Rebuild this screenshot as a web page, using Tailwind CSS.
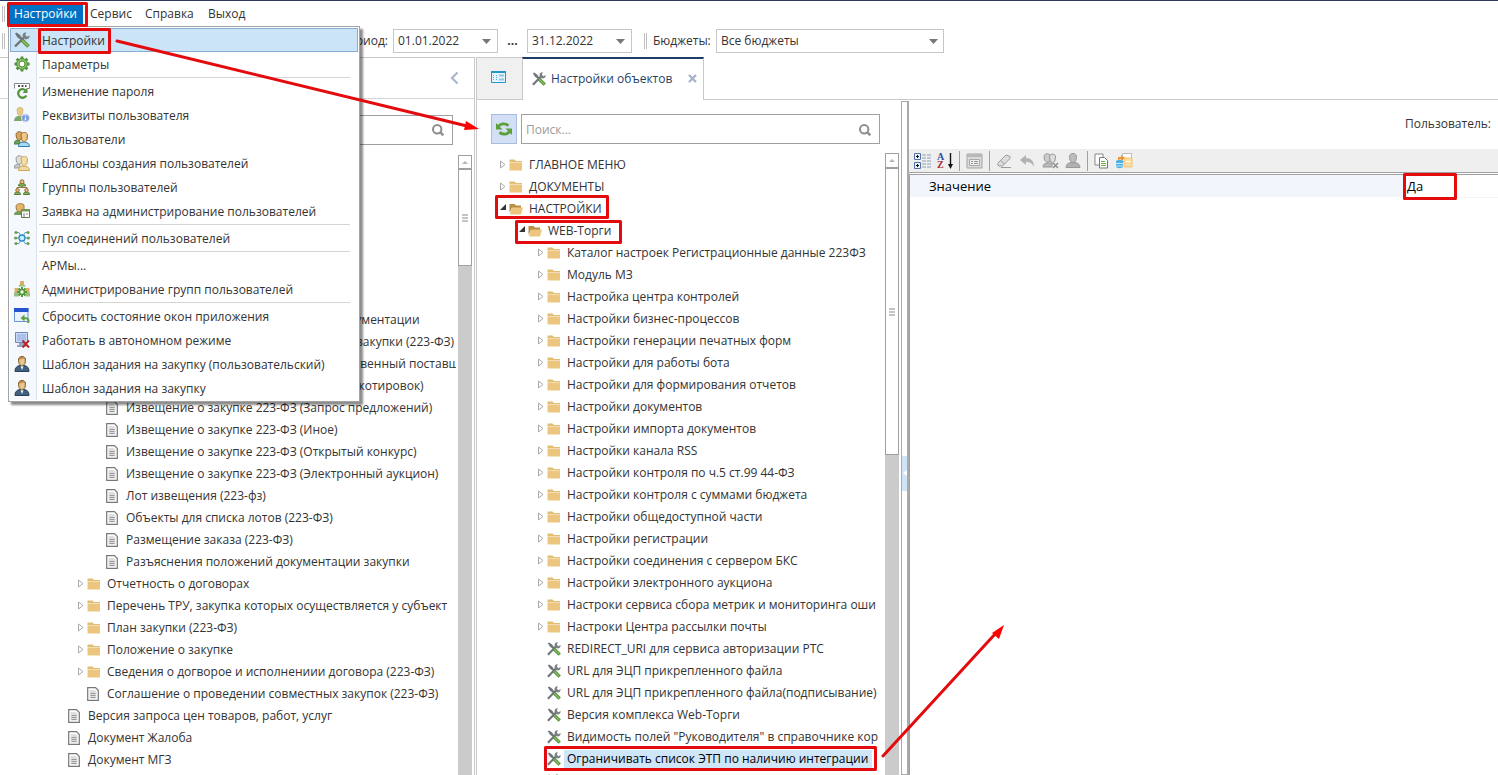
<!DOCTYPE html>
<html lang="ru">
<head>
<meta charset="utf-8">
<title>Настройки объектов</title>
<script src="https://cdn.jsdelivr.net/npm/@tailwindcss/browser@4"></script>
</head>
<body class="h-screen overflow-hidden bg-white font-['Open_Sans','Noto_Sans',sans-serif] text-[12px] text-[#333]">
<svg class="hidden">
  <symbol id="tools" viewBox="0 0 16 16"><path d="M1 1.500l1.500-1L6 3l2.500 3.500L7 8 3.500 5.500z" fill="#6f7478"/><path d="M1 14.500L10 5.500" stroke="#6f7478" stroke-width="2.400" fill="none"/><path d="M15.500 3.500l-2.500 1.300-1.700-1.700 1-2.700C9.500.2 8 2.400 8.800 5L11 7.200c2.700.7 5-1 4.500-3.700z" fill="#7b8084"/><path d="M8 8l6.500 6.500" stroke="#5b9438" stroke-width="3.800"/><path d="M8.500 8.500l5.500 5.500" stroke="#94c574" stroke-width="1.200"/></symbol>
  <symbol id="gear" viewBox="0 0 16 16"><path d="M8 .5v15M.5 8h15M2.700 2.700l10.600 10.600M13.300 2.700L2.700 13.300" stroke="#4f8f3a" stroke-width="2.800"/><circle cx="8" cy="8" r="5.400" fill="#8cc46c" stroke="#4f8f3a"/><circle cx="8" cy="8" r="3" fill="#fff" stroke="#4f8f3a"/></symbol>
  <symbol id="passwd" viewBox="0 0 16 16"><path d="M.5 5.500v-5h15v5h-3" fill="#fff" stroke="#888"/><path d="M4 3h2M7.500 3h2M11 3h1.500" stroke="#555" stroke-width="2"/><path d="M12.300 12.500A4.300 4.300 0 1 1 11.500 7.300" fill="none" stroke="#55963c" stroke-width="2.300"/><path d="M13.500 5v5H8.500z" fill="#55963c"/></symbol>
  <symbol id="userinfo" viewBox="0 0 16 16"><path d="M0 14c0-3 2-4.500 4-5h3c2 .5 4 2 4 5z" fill="#7da968"/><path d="M3 2c1-2 5-2 6 0l-.5 5-2.500 2.500L3.500 7z" fill="#e8c980" stroke="#c9a75e" stroke-width=".6"/><circle cx="11.500" cy="11" r="4" fill="#7597dc" stroke="#dce7fb"/><path d="M11.500 10.500V13.500M11.500 8.300v1.200" stroke="#fff" stroke-width="1.400"/></symbol>
  <symbol id="users" viewBox="0 0 16 16"><path d="M0 13c0-3 2-4 5-4l2 4z" fill="#6ea05c" stroke="#4d7a40"/><path d="M2 3c1-3 5-2.500 6-1v6L5 9.500 2.500 7z" fill="#d8a75f" stroke="#94672f"/><path d="M4.500 15.500c0-3 1.500-4.500 5-4.500s6 1.500 6 4.500z" fill="#a7d8f5" stroke="#2f7fb5"/><path d="M7 3.500c1.500-3 5.500-2.500 6.500 0l-.5 5-3 3-2.500-3z" fill="#f0c886" stroke="#94672f"/></symbol>
  <symbol id="usersgray" viewBox="0 0 16 16"><path d="M0 13c0-3 2-4 5-4l2 4z" fill="#c8c8c8" stroke="#999"/><path d="M2 3c1-3 5-2.500 6-1v6L5 9.500 2.500 7z" fill="#dedede" stroke="#999"/><path d="M4.500 15.500c0-3 1.500-4.500 5-4.500s6 1.500 6 4.500z" fill="#f0d9a2" stroke="#c9a75e"/><path d="M7 3.500c1.500-3 5.500-2.500 6.500 0l-.5 5-3 3-2.500-3z" fill="#f5dda0" stroke="#c9a75e"/></symbol>
  <symbol id="org" viewBox="0 0 16 16"><path d="M3 12V8.500h10V12M8 8.500V6" fill="none" stroke="#9a7436"/><path d="M4.500 7c0-2 1-2.500 3.500-2.500s3.500.5 3.500 2.500zM.5 15.500c0-2 1-2.500 3-2.500s3 .5 3 2.500zM9.500 15.500c0-2 1-2.500 3-2.500s3 .5 3 2.500z" fill="#82b463" stroke="#507d35"/><circle cx="8" cy="2.800" r="2" fill="#eac27c" stroke="#94672f"/><circle cx="3.500" cy="11.300" r="1.700" fill="#eac27c" stroke="#94672f"/><circle cx="12.500" cy="11.300" r="1.700" fill="#eac27c" stroke="#94672f"/></symbol>
  <symbol id="request" viewBox="0 0 16 16"><path d="M0 12c0-3 2-4 5-4h3v4z" fill="#6ea05c"/><path d="M2 3c1-3 6-3 8-1v5L5 9 2.500 7z" fill="#e3b670" stroke="#a97a3c"/><path d="M7.500 6.500h8v8h-8z" fill="#fff" stroke="#5d7c48"/><path d="M7 6h9v2.500H7z" fill="#6f9853"/><path d="M9 11h2M12 11h2M9 13h2" stroke="#777"/></symbol>
  <symbol id="pool" viewBox="0 0 16 16"><path d="M2 2.500h3L8 8l3-5.500h3M1 8h14M2 13.500h3L8 8l3 5.500h3" fill="none" stroke="#56a0ca"/><circle cx="8" cy="8" r="3" fill="#c5ecff" stroke="#2c8cc6" stroke-width="1.300"/><g fill="#6d9e4d"><circle cx="2" cy="2.500" r="1.600"/><circle cx="14" cy="2.500" r="1.600"/><circle cx="1.600" cy="8" r="1.600"/><circle cx="14.400" cy="8" r="1.600"/><circle cx="2" cy="13.500" r="1.600"/><circle cx="14" cy="13.500" r="1.600"/></g></symbol>
  <symbol id="orggear" viewBox="0 0 16 16"><path d="M4.500 5.500c0-2 1.500-2 3.500-2s3.500 0 3.500 2zM0 15.500V12c0-1.500 4-1.500 4.500 0v3.500zM11.500 15.500V12c.5-1.500 4.500-1.500 4.500 0v3.500z" fill="#9cbf80"/><path d="M6 0h4v4H6zM.5 7h4v4h-4zM11.500 7h4v4h-4z" fill="#dcae68"/><path d="M8 6v10M3 11h10M4.500 7.500l7 7M11.500 7.500l-7 7" stroke="#4f9a35" stroke-width="2"/><circle cx="8" cy="11" r="2.400" fill="#fff" stroke="#4f9a35" stroke-width="1.500"/></symbol>
  <symbol id="resetwin" viewBox="0 0 16 16"><path d="M.5.500h13.500v13H.5z" fill="#eaf2fd" stroke="#6f93cf"/><path d="M0 0h14.500v4H0z" fill="#2455cf"/><path d="M9.500 10.500c4-1 6 .5 4.500 4.500" fill="none" stroke="#5da044" stroke-width="2"/><path d="M10.500 6.500v7L6.500 10z" fill="#5da044"/></symbol>
  <symbol id="offline" viewBox="0 0 16 16"><path d="M1.500.5h12v10h-12z" fill="#cddcf6" stroke="#7384b8"/><path d="M3 2h9v7H3z" fill="#a9c1ec"/><path d="M5 11h5v2h2v2H3v-2h2z" fill="#93a3c8"/><path d="M8.500 8.500l6.500 7M15 8.500l-6.500 7" stroke="#b3282d" stroke-width="2"/></symbol>
  <symbol id="person" viewBox="0 0 16 16"><path d="M1 15.500c0-4 2-5.500 5-6h4c3 .5 5 2 5 6z" fill="#41607f" stroke="#2b4056"/><path d="M6.500 10L8 14l1.500-4z" fill="#fff"/><path d="M4.500 3c1-3.500 6-3.500 7 0L11 7.500 8 10.500 5 7.500z" fill="#eac58c" stroke="#7a5a2d"/><path d="M4.500 4C5-.5 11-.5 11.500 4L9 2.500z" fill="#b98d45"/></symbol>
  <symbol id="folder" viewBox="0 0 14 14"><path d="M.5 1.500h5L7 3h6v1.500H.5z" fill="#e3bd72"/><path d="M.5 5h12.500v7.500H.5z" fill="#ecc67f"/></symbol>
  <symbol id="folderopen" viewBox="0 0 14 14"><path d="M.5 2h5L7 3.500h5V6H3L.5 11z" fill="#b98f45"/><path d="M3 5.500h11L12 12.500H1z" fill="#ecc67f"/></symbol>
  <symbol id="doc" viewBox="0 0 12 14"><path d="M.7.700h7.800l2.800 2.800v9.800H.7z" fill="#fff" stroke="#777" stroke-width="1.200"/><path d="M2.500 3h5l2 1.500V11.500h-7z" fill="#dedede"/><path d="M3.500 6.500h5M3.500 8.500h5M3.500 10.500h5" stroke="#999"/></symbol>
  <symbol id="search" viewBox="0 0 12 12"><circle cx="5.200" cy="5.200" r="4.200" fill="none" stroke="#8d8d8d" stroke-width="2"/><path d="M8 8l3.300 3.300" stroke="#8d8d8d" stroke-width="2.400"/></symbol>
</svg>

<div class="relative flex h-full flex-col border-t border-[#2c3763]">
  <nav class="flex h-[26px] shrink-0 items-center">
    <span class="ml-[2px] h-4 w-[3px] border-x border-[#c0c0c0]"></span>
    <button class="ml-[3px] h-5 w-[75px] bg-[#0072c6] text-white">Настройки</button>
    <button class="ml-[7px] w-[43px] text-left whitespace-nowrap">Сервис</button>
    <button class="ml-3 w-[51px] text-left whitespace-nowrap">Справка</button>
    <button class="ml-3 w-[38px] text-left whitespace-nowrap">Выход</button>
  </nav>
  <div class="flex h-[30px] shrink-0 items-center pb-[2px]">
    <span class="ml-[2px] h-4 w-[3px] border-x border-[#c0c0c0]"></span>
    <div class="flex w-[388px] justify-end pr-[5px]">Период:</div>
    <button aria-label="Начало периода" class="flex h-6 w-[105px] items-center justify-between border border-[#c6c6c6] pr-[6px] pl-1">01.01.2022<svg width="9" height="5"><path d="M0 0h9L4.500 5z" fill="#777"/></svg></button>
    <span class="w-[29px] text-center font-bold">...</span>
    <button aria-label="Конец периода" class="flex h-6 w-[105px] items-center justify-between border border-[#c6c6c6] pr-[6px] pl-1">31.12.2022<svg width="9" height="5"><path d="M0 0h9L4.500 5z" fill="#777"/></svg></button>
    <span class="ml-3 h-4 w-[3px] border-x border-[#c0c0c0]"></span>
    <label for="budget" class="ml-[6px] w-[63px] whitespace-nowrap">Бюджеты:</label>
    <div class="relative">
      <select id="budget" class="block h-6 w-[228px] appearance-none border border-[#c6c6c6] bg-white pl-1"><option>Все бюджеты</option></select>
      <svg class="pointer-events-none absolute top-[10px] right-[6px]" width="9" height="5"><path d="M0 0h9L4.500 5z" fill="#777"/></svg>
    </div>
  </div>

  <main class="flex min-h-0 flex-1">
    <section class="flex w-[475px] shrink-0 flex-col border-t border-r border-[#c9c9c9]">
      <div class="flex h-[41px] shrink-0 items-center justify-end border-b border-[#d5d5d5] pr-[15px]">
        <button aria-label="Свернуть"><svg width="9" height="14"><path d="M7.500 1.500L2 7l5.500 5.500" fill="none" stroke="#a9b6cc" stroke-width="2.200"/></svg></button>
      </div>
      <div class="relative mx-[21px] mt-4 h-[30px] shrink-0">
        <input aria-label="Поиск документов" class="h-full w-full border border-[#a0a0a0] px-1">
        <svg class="absolute top-[9px] right-[9px]" width="12" height="12"><use href="#search"/></svg>
      </div>
      <div class="mt-[10px] flex min-h-0 flex-1 pr-[2px]">
        <ul id="left-tree" class="w-[456px] overflow-hidden pt-[154px]"></ul>
        <div class="ml-[2px] flex w-[14px] flex-col bg-[#cbcbcb]">
          <div class="grid h-[14px] place-items-center border border-[#a0a0a0] bg-white"><svg width="6" height="3"><path d="M0 3h6L3 0z" fill="#b5b5b5"/></svg></div>
          <div class="grid h-[97px] place-items-center border border-[#a0a0a0] bg-white"><svg width="6" height="8"><path d="M0 1h6M0 4h6M0 7h6" stroke="#c4c4c4" stroke-width="2"/></svg></div>
        </div>
      </div>
    </section>

    <section class="ml-px flex min-w-0 flex-1 flex-col border-l border-[#c9c9c9]">
      <div class="flex h-[43px] shrink-0">
        <button aria-label="Обзор" class="grid w-[45px] place-items-center border-y border-[#c9c9c9] bg-[#f0f0f0] pr-[2px] pb-1"><svg width="15" height="12"><path d="M.5.500h14v11H.5z" fill="#e6f5fd" stroke="#2496c8"/><path d="M0 0h15v2H0z" fill="#2496c8"/><path d="M8 4.500h5M8 8.500h5" stroke="#8ec9e6" stroke-width="2"/><path d="M2 4.500h1M5 4.500h1M2 6.500h1M5 6.500h1M2 8.500h1M5 8.500h1" stroke="#58afd6"/></svg></button>
        <div class="flex w-[182px] items-center border-x border-t-2 border-x-[#c9c9c9] border-t-[#1d3f66] pb-[2px] pl-[9px] text-[#1f3f68]">
          <svg width="14" height="14"><use href="#tools"/></svg>
          <span class="ml-[5px] w-[125px] whitespace-nowrap">Настройки объектов</span>
          <button aria-label="Закрыть" class="ml-3"><svg width="9" height="9"><path d="M1 1l7 7M8 1l-7 7" stroke="#a3b1c9" stroke-width="2.200"/></svg></button>
        </div>
        <div class="flex-1 border-b border-[#c9c9c9]"></div>
      </div>
      <div class="flex min-h-0 flex-1">
        <div class="flex w-[424px] shrink-0 flex-col">
          <div class="mt-[14px] ml-[14px] flex h-[30px] shrink-0 gap-1">
            <button aria-label="Обновить" class="grid w-[26px] place-items-center border border-[#a6bce0] bg-[#d3dff5]"><svg width="16" height="14"><path d="M2 5C4 1.500 8.500.800 12.500 3.500" fill="none" stroke="#5da03a" stroke-width="2.800"/><path d="M0 1v6.500h6.500z" fill="#5da03a"/><path d="M14 9C12 12.500 7.500 13.200 3.500 10.500" fill="none" stroke="#5da03a" stroke-width="2.800"/><path d="M16 13V6.500H9.500z" fill="#5da03a"/></svg></button>
            <div class="relative w-[359px]">
              <input aria-label="Поиск настроек" placeholder="Поиск..." class="h-full w-full border border-[#a0a0a0] px-1 placeholder:text-[#9b9b9b]">
              <svg class="absolute top-[10px] right-[9px]" width="12" height="12"><use href="#search"/></svg>
            </div>
          </div>
          <div class="mt-[9px] flex min-h-0 flex-1">
            <ul id="center-tree" class="w-[405px] overflow-hidden pt-px"></ul>
            <div class="ml-[3px] flex w-[14px] flex-col bg-[#cbcbcb]">
              <div class="grid h-[15px] place-items-center border border-[#a0a0a0] bg-white"><svg width="6" height="3"><path d="M0 3h6L3 0z" fill="#b5b5b5"/></svg></div>
              <div class="grid h-[287px] place-items-center border border-[#a0a0a0] bg-white"><svg width="6" height="8"><path d="M0 1h6M0 4h6M0 7h6" stroke="#c4c4c4" stroke-width="2"/></svg></div>
            </div>
          </div>
        </div>
        <div class="mt-px flex w-2 shrink-0 flex-col justify-center border border-r-2 border-[#aaa]"><div class="mt-[70px] grid h-[35px] place-items-center bg-[#cfe4f7]"><svg width="4" height="6"><path d="M0 3l4-3v6z" fill="#fff"/></svg></div></div>
        <div class="flex min-w-0 flex-1 flex-col">
          <div class="flex h-[49px] shrink-0 items-center justify-end pr-[7px] pb-[2px]">Пользователь:</div>
          <div class="flex h-[23px] shrink-0 items-center bg-[#efefef] pl-[5px]">
            <button aria-label="По категориям" class="w-[17px]"><svg width="17" height="16"><path d="M.5.500h6v6h-6zM.5 9.500h6v6h-6z" fill="#e7effb" stroke="#5571a8"/><path d="M2 3.500h3M3.500 2v3M2 12.500h3M3.500 11v3" stroke="#111"/><path d="M8 2h4M13 2h4M8 5h4M13 5h4M8 8h4M13 8h4M8 11h4M13 11h4M8 14h4M13 14h4" stroke="#8aa0bd"/></svg></button>
            <button aria-label="По алфавиту" class="relative ml-[6px] h-4 w-4 font-['Liberation_Serif',serif] text-[10px] leading-[8px] font-bold"><span class="block text-left text-[#2d4fa0]">A</span><span class="block text-left text-[#a82c35]">Z</span><svg class="absolute top-0 right-0" width="5" height="16"><path d="M2.500 0v12" stroke="#111" stroke-width="1.400"/><path d="M0 11h5l-2.500 5z" fill="#111"/></svg></button>
            <span class="mx-[6px] h-5 w-px bg-[#a0a0a0]"></span>
            <button aria-label="Форма"><svg width="17" height="16"><path d="M1 1h15v14H1z" fill="#dadada" stroke="#a5a5a5"/><path d="M1 1h15v3H1z" fill="#b8b8b8"/><path d="M3.500 6.500h10v6h-10z" fill="#eee" stroke="#aaa"/><path d="M5 8.500h2M8 8.500h4M5 10.500h2M8 10.500h4" stroke="#999"/></svg></button>
            <span class="mx-[6px] h-5 w-px bg-[#a0a0a0]"></span>
            <button aria-label="Очистить"><svg width="16" height="16"><path d="M1.500 10.500L10 2l4 1.500v2L6.500 13h-4z" fill="#ddd" stroke="#9b9b9b"/><path d="M4.500 7.500l4 3.500M5 14.500h10" stroke="#9b9b9b"/></svg></button>
            <button aria-label="Отменить" class="ml-2"><svg width="15" height="16"><path d="M0 7l6-5v3c5 0 8 3 8 9-2-4-4-5-8-5v3z" fill="#b3b3b3"/></svg></button>
            <button aria-label="Удалить пользователей" class="ml-[7px]"><svg width="17" height="16"><path d="M1 14c0-3 2-4 5-4h4v4z" fill="#bbb" stroke="#999"/><path d="M2 3c1-3 5-2.500 6-1v6L5 9.500 2.500 7z" fill="#ccc" stroke="#999"/><path d="M7.500 3c1.500-3 5.500-2 6 0l-.5 5-2.500 2-2.500-2z" fill="#ddd" stroke="#999"/><path d="M11 10l5 5M16 10l-5 5" stroke="#8f8f8f" stroke-width="1.600"/></svg></button>
            <button aria-label="Пользователь" class="ml-[6px]"><svg width="16" height="16"><path d="M1 14.500c0-3 2-4.500 5-5h4c3 .5 5 2 5 5z" fill="#b0b0b0" stroke="#999"/><path d="M4.500 3c1-3.500 6-3.500 7 0L11 7.500 8 10 5 7.500z" fill="#bdbdbd" stroke="#9a9a9a"/></svg></button>
            <span class="mx-[6px] h-5 w-px bg-[#a0a0a0]"></span>
            <button aria-label="Копировать"><svg width="15" height="16"><path d="M1 1h8v11H1z" fill="#fff" stroke="#888"/><path d="M5.500 4.500h5l3 3v7.500h-8z" fill="#fff" stroke="#777"/><path d="M7 8.500h4M7 10.500h5M7 12.500h5" stroke="#68ab3e"/></svg></button>
            <button aria-label="Экспорт" class="ml-[7px]"><svg width="17" height="16"><path d="M6.500.5h9v8h-9z" fill="#fff" stroke="#bbb"/><path d="M8 5h8v9H8z" fill="#fbdc9d" stroke="#f0c578"/><path d="M9.500 8.500h5" stroke="#fff"/><path d="M0 8c1-1.500 6-1.500 7 0v6c-1 1.500-6 1.500-7 0z" fill="#4db0e2"/><path d="M0 10.500h7M0 13h7" stroke="#c9e9f8"/><path d="M2 7V4h3V2l4 3-4 3V6" fill="#f0942b"/></svg></button>
          </div>
          <div class="h-[3px] shrink-0 border-y border-[#a0a0a0]"></div>
          <div class="min-h-0 flex-1 border-l border-[#a0a0a0]">
            <table class="w-full table-fixed text-left text-[13px] text-black">
              <tr class="h-[22px]"><th class="bg-[#f2f6fc] p-0 pt-[2px] pl-[19px] font-normal">Значение</th><td class="w-[95px] border-b border-[#f2f4f7] p-0 pt-[2px] pl-1">Да</td></tr>
            </table>
          </div>
        </div>
      </div>
    </section>
  </main>

  <div class="absolute top-[25px] left-[8px] w-[352px] border border-[#a3a3a3] bg-white p-px shadow-[3px_3px_2px_rgba(0,0,0,0.45)]">
    <ul id="menu" class="bg-linear-to-r from-[#f5f8fd] from-[26px] to-white to-[26px]"></ul>
  </div>

  <svg class="pointer-events-none absolute -top-px left-0" width="1498" height="775" fill="none" stroke="#e30b0e" stroke-width="3" stroke-linejoin="round">
    <rect x="8.500" y="3.500" width="78" height="22"/>
    <rect x="39.500" y="29.500" width="70" height="23"/>
    <rect x="496.500" y="196.500" width="111" height="21"/>
    <rect x="516.500" y="221.500" width="104" height="21"/>
    <rect x="1404.500" y="174.500" width="51" height="24"/>
    <rect x="545.500" y="747.500" width="330" height="22"/>
    <path d="M117 41L467 126M883 756L996 633" stroke-linecap="round"/>
    <path d="M479 129l-15 1 2-9zM1004 625l-5 14-7-6z" fill="#f00" stroke="none"/>
  </svg>
</div>

<script>
const icon = (id, w, h) => `<svg class="shrink-0" width="${w}" height="${h}"><use href="#${id}"/></svg>`;
const arrow = state => state === 'open'
  ? '<svg width="7" height="7" class="mb-1"><path d="M6 0v6H0z" fill="#333"/></svg>'
  : state === 'closed' ? '<svg width="6" height="9" class="mb-px"><path d="M.5 1v7L5 4.500z" fill="#fff" stroke="#aaa"/></svg>' : '';

function row([indent, kind, text, mark]) {
  const li = document.createElement('li');
  li.className = 'flex h-[22px] items-center whitespace-nowrap';
  li.style.paddingLeft = indent + 'px';
  const state = kind === 'folder' ? 'closed' : kind === 'folderopen' ? 'open' : '';
  const size = kind === 'doc' ? [12, 14] : [14, 14];
  li.innerHTML = `<span class="flex w-[9px] shrink-0">${arrow(state)}</span><span class="flex w-[17px] shrink-0">${kind ? icon(kind, ...size) : ''}</span>` +
    `<span class="${mark ? 'bg-[#cfe6f8] text-black h-[18px] leading-[18px] pl-[3px] pr-1' : 'pl-[3px]'}">${text}</span>`;
  return li;
}

const tree = (id, rows) => document.getElementById(id).append(...rows.map(row));

tree('left-tree', [
  [306, '', 'документации'],
  [328, '', 'закупки (223-ФЗ)'],
  [291, '', 'Единственный поставщи'],
  [285, '', 'Запрос котировок)'],
  [97, 'doc', 'Извещение о закупке 223-ФЗ (Запрос предложений)'],
  [97, 'doc', 'Извещение о закупке 223-ФЗ (Иное)'],
  [97, 'doc', 'Извещение о закупке 223-ФЗ (Открытый конкурс)'],
  [97, 'doc', 'Извещение о закупке 223-ФЗ (Электронный аукцион)'],
  [97, 'doc', 'Лот извещения (223-фз)'],
  [97, 'doc', 'Объекты для списка лотов (223-ФЗ)'],
  [97, 'doc', 'Размещение заказа (223-ФЗ)'],
  [97, 'doc', 'Разъяснения положений документации закупки'],
  [78, 'folder', 'Отчетность о договорах'],
  [78, 'folder', 'Перечень ТРУ, закупка которых осуществляется у субъект'],
  [78, 'folder', 'План закупки (223-ФЗ)'],
  [78, 'folder', 'Положение о закупке'],
  [78, 'folder', 'Сведения о догворое и исполнениии договора (223-ФЗ)'],
  [78, 'doc', 'Соглашение о проведении совместных закупок (223-ФЗ)'],
  [59, 'doc', 'Версия запроса цен товаров, работ, услуг'],
  [59, 'doc', 'Документ Жалоба'],
  [59, 'doc', 'Документ МГЗ'],
  [59, 'doc', ''],
]);

tree('center-tree', [
  [23, 'folder', 'ГЛАВНОЕ МЕНЮ'],
  [23, 'folder', 'ДОКУМЕНТЫ'],
  [23, 'folderopen', 'НАСТРОЙКИ'],
  [42, 'folderopen', 'WEB-Торги'],
  [61, 'folder', 'Каталог настроек Регистрационные данные 223ФЗ'],
  [61, 'folder', 'Модуль МЗ'],
  [61, 'folder', 'Настройка центра контролей'],
  [61, 'folder', 'Настройки бизнес-процессов'],
  [61, 'folder', 'Настройки генерации печатных форм'],
  [61, 'folder', 'Настройки для работы бота'],
  [61, 'folder', 'Настройки для формирования отчетов'],
  [61, 'folder', 'Настройки документов'],
  [61, 'folder', 'Настройки импорта документов'],
  [61, 'folder', 'Настройки канала RSS'],
  [61, 'folder', 'Настройки контроля по ч.5 ст.99 44-ФЗ'],
  [61, 'folder', 'Настройки контроля с суммами бюджета'],
  [61, 'folder', 'Настройки общедоступной части'],
  [61, 'folder', 'Настройки регистрации'],
  [61, 'folder', 'Настройки соединения с сервером БКС'],
  [61, 'folder', 'Настройки электронного аукциона'],
  [61, 'folder', 'Настроки сервиса сбора метрик и мониторинга оши'],
  [61, 'folder', 'Настроки Центра рассылки почты'],
  [61, 'tools', 'REDIRECT_URI для сервиса авторизации РТС'],
  [61, 'tools', 'URL для ЭЦП прикрепленного файла'],
  [61, 'tools', 'URL для ЭЦП прикрепленного файла(подписывание)'],
  [61, 'tools', 'Версия комплекса Web-Торги'],
  [61, 'tools', 'Видимость полей "Руководителя" в справочнике кор'],
  [61, 'tools', 'Ограничивать список ЭТП по наличию интеграции', true],
  [61, 'tools', ''],
]);

const menu = [
  ['tools', 'Настройки'], ['gear', 'Параметры'], null,
  ['passwd', 'Изменение пароля'], ['userinfo', 'Реквизиты пользователя'], ['users', 'Пользователи'],
  ['usersgray', 'Шаблоны создания пользователей'], ['org', 'Группы пользователей'],
  ['request', 'Заявка на администрирование пользователей'], null,
  ['pool', 'Пул соединений пользователей'], null,
  ['', 'АРМы...'], ['orggear', 'Администрирование групп пользователей'], null,
  ['resetwin', 'Сбросить состояние окон приложения'], ['offline', 'Работать в автономном режиме'],
  ['person', 'Шаблон задания на закупку (пользовательский)'], ['person', 'Шаблон задания на закупку'],
];
document.getElementById('menu').innerHTML = menu.map((m, i) => m
  ? `<li><button class="flex h-6 w-full items-center whitespace-nowrap ${i ? '' : 'bg-[#cce4f7] outline outline-[#86add6] -outline-offset-1'}"><span class="flex h-full w-[27px] shrink-0 items-center border-r border-[#d9e1ec] pl-1">${m[0] ? icon(m[0], 16, 16) : ''}</span><span class="pt-px pl-[5px]">${m[1]}</span></button></li>`
  : '<li class="flex h-[3px]"><span class="w-[27px] shrink-0 border-r border-[#d9e1ec]"></span><span class="mt-px mr-2 ml-[2px] h-px flex-1 bg-[#d5d5d5]"></span></li>').join('');
</script>
</body>
</html>
